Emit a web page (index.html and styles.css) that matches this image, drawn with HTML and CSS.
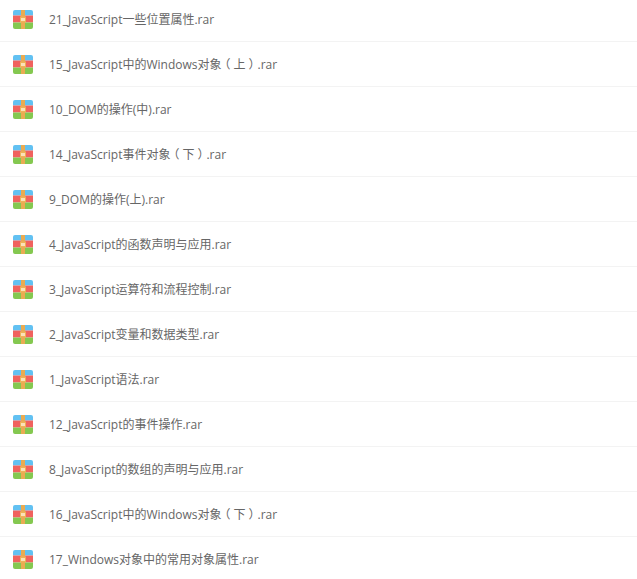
FILE: index.html
```
<!DOCTYPE html>
<html lang="zh-CN">
<head>
<meta charset="utf-8">
<title>Files</title>
<link rel="stylesheet" href="styles.css">
</head>
<body>
<svg class="defs" width="0" height="0" aria-hidden="true">
  <symbol id="rar" viewBox="0 0 20 19">
    <path d="M2 0H18a2 2 0 0 1 2 2V5.5H0V2a2 2 0 0 1 2-2z" fill="#62c1f2"/>
    <rect x="0" y="5.5" width="20" height="7" fill="#f0625e"/>
    <path d="M0 12.5H20V17a2 2 0 0 1-2 2H2a2 2 0 0 1-2-2z" fill="#84c850"/>
    <rect x="8" y="0" width="4" height="19" fill="#e9ab52"/>
    <rect x="7" y="6.5" width="6" height="6" fill="#eeb25a"/>
    <rect x="8" y="8" width="4" height="3" fill="#fbe3b8"/>
  </symbol>
</svg>
<ul class="list">
  <li class="row"><svg class="icon"><use href="#rar"/></svg><span class="name">21_JavaScript一些位置属性.rar</span></li>
  <li class="row"><svg class="icon"><use href="#rar"/></svg><span class="name">15_JavaScript中的Windows对象<span class="paren">（</span>上<span class="paren">）</span>.rar</span></li>
  <li class="row"><svg class="icon"><use href="#rar"/></svg><span class="name">10_DOM的操作(中).rar</span></li>
  <li class="row"><svg class="icon"><use href="#rar"/></svg><span class="name">14_JavaScript事件对象<span class="paren">（</span>下<span class="paren">）</span>.rar</span></li>
  <li class="row"><svg class="icon"><use href="#rar"/></svg><span class="name">9_DOM的操作(上).rar</span></li>
  <li class="row"><svg class="icon"><use href="#rar"/></svg><span class="name">4_JavaScript的函数声明与应用.rar</span></li>
  <li class="row"><svg class="icon"><use href="#rar"/></svg><span class="name">3_JavaScript运算符和流程控制.rar</span></li>
  <li class="row"><svg class="icon"><use href="#rar"/></svg><span class="name">2_JavaScript变量和数据类型.rar</span></li>
  <li class="row"><svg class="icon"><use href="#rar"/></svg><span class="name">1_JavaScript语法.rar</span></li>
  <li class="row"><svg class="icon"><use href="#rar"/></svg><span class="name">12_JavaScript的事件操作.rar</span></li>
  <li class="row"><svg class="icon"><use href="#rar"/></svg><span class="name">8_JavaScript的数组的声明与应用.rar</span></li>
  <li class="row"><svg class="icon"><use href="#rar"/></svg><span class="name">16_JavaScript中的Windows对象<span class="paren">（</span>下<span class="paren">）</span>.rar</span></li>
  <li class="row"><svg class="icon"><use href="#rar"/></svg><span class="name">17_Windows对象中的常用对象属性.rar</span></li>
</ul>
</body>
</html>
```
FILE: styles.css
```
html, body {
  margin: 0;
  padding: 0;
  background: #fff;
  overflow: hidden;
}
.defs {
  display: block;
  height: 0;
}
.list {
  list-style: none;
  margin: -3px 0 0;
  padding: 0;
  font-family: "Open Sans", "Noto Sans CJK SC", sans-serif;
  font-size: 12px;
  color: #666;
}
.row {
  box-sizing: border-box;
  height: 45px;
  display: flex;
  align-items: center;
  gap: 16px;
  padding-left: 13px;
  border-bottom: 1px solid #f3f3f3;
}
.icon {
  width: 20px;
  height: 19px;
  flex: none;
}
.name {
  white-space: nowrap;
}
.paren {
  font-feature-settings: "halt";
  padding: 0 3px;
}
```
